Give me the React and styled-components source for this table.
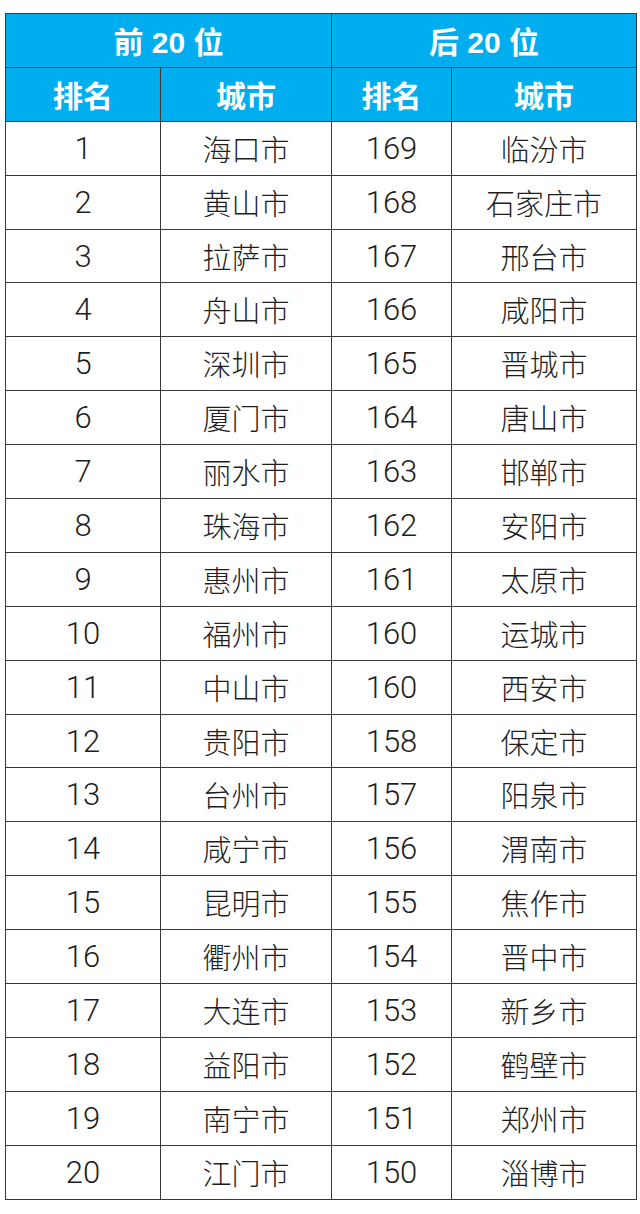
import React from "react";
import styled, { createGlobalStyle } from "styled-components";

const GlobalStyle = createGlobalStyle`
    html, body {
        margin: 0;
        padding: 0;
        background: #fff;
    }
`;

const top = [
    "海口市", "黄山市", "拉萨市", "舟山市", "深圳市", "厦门市", "丽水市", "珠海市", "惠州市", "福州市",
    "中山市", "贵阳市", "台州市", "咸宁市", "昆明市", "衢州市", "大连市", "益阳市", "南宁市", "江门市",
];

const bottom = [
    [169, "临汾市"], [168, "石家庄市"], [167, "邢台市"], [166, "咸阳市"], [165, "晋城市"],
    [164, "唐山市"], [163, "邯郸市"], [162, "安阳市"], [161, "太原市"], [160, "运城市"],
    [160, "西安市"], [158, "保定市"], [157, "阳泉市"], [156, "渭南市"], [155, "焦作市"],
    [154, "晋中市"], [153, "新乡市"], [152, "鹤壁市"], [151, "郑州市"], [150, "淄博市"],
];

export default function App() {
    return (
        <>
            <GlobalStyle />
            <Page>
                <Table>
                    <colgroup>
                        <col style={{ width: 155 }} />
                        <col style={{ width: 171 }} />
                        <col style={{ width: 120 }} />
                        <col style={{ width: 185 }} />
                    </colgroup>
                    <thead>
                        <Row>
                            <HeadCell colSpan={2}>前 20 位</HeadCell>
                            <HeadCell colSpan={2}>后 20 位</HeadCell>
                        </Row>
                        <Row>
                            <HeadCell>排名</HeadCell>
                            <HeadCell>城市</HeadCell>
                            <HeadCell>排名</HeadCell>
                            <HeadCell>城市</HeadCell>
                        </Row>
                    </thead>
                    <tbody>
                        {top.map((city, i) => (
                            <Row key={i}>
                                <Cell $num>{i + 1}</Cell>
                                <Cell>{city}</Cell>
                                <Cell $num>{bottom[i][0]}</Cell>
                                <Cell>{bottom[i][1]}</Cell>
                            </Row>
                        ))}
                    </tbody>
                </Table>
            </Page>
        </>
    );
}

const Page = styled.div`
    width: 640px;
    height: 1214px;
    padding: 13px 0 0 5px;
    box-sizing: border-box;
`;

const Table = styled.table`
    width: 631px;
    border-collapse: collapse;
    table-layout: fixed;
    border: 1.5px solid #3a3a3a;
    font-family: "Liberation Sans", "Noto Sans CJK SC", sans-serif;
`;

const Row = styled.tr`
    height: 53.9px;
`;

const HeadCell = styled.th`
    background-color: #00aeef;
    color: #fff;
    font-family: "Liberation Sans", "Noto Sans CJK SC", sans-serif;
    font-size: 30px;
    font-weight: 700;
    text-align: center;
    vertical-align: middle;
    border: 1.5px solid #3a3a3a;
    padding: 0;
`;

const Cell = styled.td`
    color: #1e1e1e;
    font-family: ${(p) => (p.$num ? `"Roboto", "Liberation Sans", sans-serif` : `"Noto Sans CJK SC", sans-serif`)};
    font-size: ${(p) => (p.$num ? "31px" : "29px")};
    font-weight: 300;
    line-height: 1;
    text-align: center;
    vertical-align: middle;
    border: 1.5px solid #3a3a3a;
    padding: 0;
`;
